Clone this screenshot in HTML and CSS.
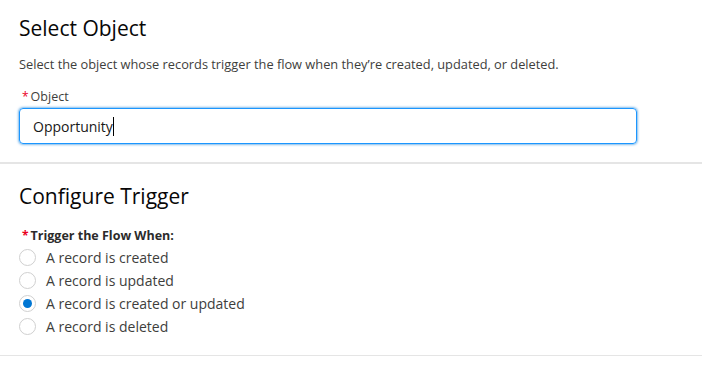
FILE: index.html
```html
<!DOCTYPE html>
<html lang="en">
<head>
    <meta charset="UTF-8">
    <title>Select Object</title>
    <link rel="stylesheet" href="styles.css">
</head>
<body>
    <section class="panel">
        <h2 class="panel-title">Select Object</h2>
        <p class="panel-desc">Select the object whose records trigger the flow when they’re created, updated, or deleted.</p>
        <label class="field-label" for="objectInput"><abbr class="required">*</abbr>Object</label>
        <div class="input-box">
            <span class="input-value">Opportunity</span><span class="caret"></span>
        </div>
    </section>

    <section class="panel panel-last">
        <h2 class="panel-title">Configure Trigger</h2>
        <div class="group-label"><abbr class="required">*</abbr>Trigger the Flow When:</div>
        <div class="radio-list">
            <label class="radio"><span class="radio-dot"></span>A record is created</label>
            <label class="radio"><span class="radio-dot"></span>A record is updated</label>
            <label class="radio checked"><span class="radio-dot"></span>A record is created or updated</label>
            <label class="radio"><span class="radio-dot"></span>A record is deleted</label>
        </div>
    </section>
</body>
</html>
```

FILE: styles.css
```css
:root {
    --text-color: #181818;
    --muted: #3e3e3c;
    --brand: #1b96ff;
    --brand-dark: #0176d3;
    --required: #ea001e;
    --divider: #e5e5e5;
}

* {
    margin: 0;
    padding: 0;
    box-sizing: border-box;
}

body {
    font-family: "Open Sans", "Noto Sans", sans-serif;
    color: var(--text-color);
    background: #fff;
    width: 702px;
}

.panel {
    padding: 14px 65px 18px 19px;
    border-bottom: 2px solid var(--divider);
}

.panel-last {
    padding-top: 18px;
    padding-bottom: 17px;
    border-bottom-width: 1px;
}

.panel-title {
    font-size: 21px;
    font-weight: 400;
    line-height: 28px;
    color: #080707;
}

.panel-desc {
    font-size: 12.8px;
    line-height: 18px;
    color: var(--muted);
    margin-top: 13px;
}

.required {
    color: var(--required);
    text-decoration: none;
    border: none;
    font-size: 12px;
    margin: 0 2px 0 3px;
}

.field-label {
    display: block;
    font-size: 12.5px;
    line-height: 18px;
    color: var(--muted);
    margin-top: 15px;
}

.input-box {
    margin-top: 2px;
    height: 36px;
    border: 1px solid var(--brand);
    border-radius: 4px;
    box-shadow: 0 0 3px var(--brand-dark);
    display: flex;
    align-items: center;
    padding-left: 13px;
    font-size: 14px;
}

.caret {
    display: inline-block;
    width: 1px;
    height: 19px;
    background: #000;
}

.group-label {
    font-size: 12.5px;
    font-weight: 700;
    line-height: 18px;
    color: #2b2b2b;
    margin-top: 17px;
    margin-bottom: 1px;
}

.radio-list {
    display: flex;
    flex-direction: column;
}

.radio {
    display: flex;
    align-items: center;
    height: 23px;
    font-size: 14px;
    color: var(--muted);
}

.radio-dot {
    width: 17px;
    height: 17px;
    border: 1px solid #d0d0d0;
    border-radius: 50%;
    margin-right: 10px;
    position: relative;
}

.radio.checked .radio-dot::after {
    content: "";
    position: absolute;
    left: 3px;
    top: 3px;
    width: 9px;
    height: 9px;
    border-radius: 50%;
    background: var(--brand-dark);
}
```
